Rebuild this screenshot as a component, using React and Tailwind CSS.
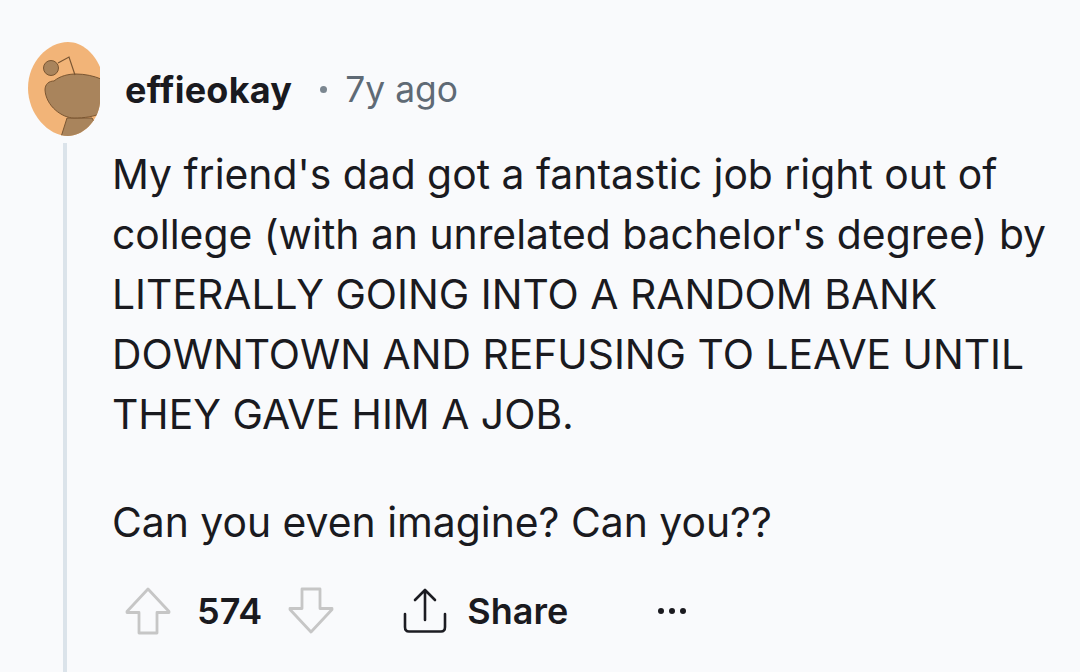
import React from 'react';

const Avatar = () => (
  <svg width="74" height="95" viewBox="27 42 74 95" className="shrink-0">
    <defs>
      <clipPath id="egg">
        <path d="M68 42C82 42 94 53 100 67L100 103C98 122 82 136 68 136C48 136 28 114 28 88C28 62 48 42 68 42Z" />
      </clipPath>
    </defs>
    <g clipPath="url(#egg)">
      <rect x="27" y="42" width="74" height="95" fill="#f2b478" />
      <path d="M61 137L67 118H92L96 125L90 137Z" fill="#a9845c" stroke="#7a5632" strokeWidth="1" />
      <path d="M45 90C45 84 49 81 54 81C60 76 68 74 76 74C85 74 94 76 101 79L104 112C94 117 84 118 74 118C62 118 46 106 45 90Z" fill="#a9845c" stroke="#7a5632" strokeWidth="1" />
      <path d="M58 63L69 57L75 75" fill="none" stroke="#7a5632" strokeWidth="1.2" />
      <circle cx="51" cy="68" r="7.5" fill="#a9845c" stroke="#7a5632" strokeWidth="1" />
    </g>
  </svg>
);

const UpArrow = () => (
  <svg width="46" height="48" viewBox="125 586 46 48" className="shrink-0">
    <path d="M148 588L169 610.5V611.5H157V632H139V611.5H127V610.5Z" fill="none" stroke="#c6c6c6" strokeWidth="2.8" strokeLinejoin="round" />
  </svg>
);

const DownArrow = () => (
  <svg width="46" height="48" viewBox="288 589 46 48" className="shrink-0">
    <path d="M311 634L332 611.5V610.5H320V591H302V610.5H290V611.5Z" fill="none" stroke="#c6c6c6" strokeWidth="2.8" strokeLinejoin="round" />
  </svg>
);

const ShareIcon = () => (
  <svg width="46" height="46" viewBox="402 588 46 46" className="shrink-0">
    <path d="M425 620V591M415 600L425 590L435 600M405 614V627C405 630 406 631.5 409 631.5H441C444 631.5 445 630 445 627V614" fill="none" stroke="#1c1c22" strokeWidth="2.6" strokeLinecap="round" strokeLinejoin="round" />
  </svg>
);

export default function App() {
  return (
    <div className="h-[672px] w-[1080px] overflow-hidden bg-[#f9fafc] font-['Inter',sans-serif] text-[#1a1a1f]">
      <div className="flex h-[143px] items-start pl-[27px] pt-[42px]">
        <Avatar />
        <div className="ml-[24px] flex h-[95px] items-center text-[#1a1a1f]">
          <span className="text-[36px] font-bold leading-none tracking-[0.25px] [font-variant-ligatures:none]">effieokay</span>
          <span className="ml-[28px] h-[7px] w-[7px] rounded-full bg-[#7b8690]" />
          <span className="ml-[18px] text-[35.4px] leading-none text-[#5f6a75]">7y ago</span>
        </div>
      </div>
      <div className="ml-[63px] h-[529px] border-l-[4px] border-[#dbe3ea] pl-[45px]">
        <div className="pt-[1px] text-[40.85px] leading-[60px] whitespace-nowrap">
          <p>My friend's dad got a fantastic job right out of</p>
          <p>college (with an unrelated bachelor's degree) by</p>
          <p>LITERALLY GOING INTO A RANDOM BANK</p>
          <p>DOWNTOWN AND REFUSING TO LEAVE UNTIL</p>
          <p>THEY GAVE HIM A JOB.</p>
          <p className="mt-[48px]">Can you even imagine? Can you??</p>
        </div>
        <div className="mt-[35px] flex items-center">
          <div className="ml-[13px]"><UpArrow /></div>
          <span className="ml-[26px] text-[36px] font-semibold leading-none">574</span>
          <div className="ml-[26px]"><DownArrow /></div>
          <div className="ml-[68px]"><ShareIcon /></div>
          <span className="ml-[19px] text-[36px] font-semibold leading-none">Share</span>
          <div className="ml-[90px] flex gap-[5px]">
            <span className="h-[6px] w-[6px] rounded-full bg-[#1a1a1f]" />
            <span className="h-[6px] w-[6px] rounded-full bg-[#1a1a1f]" />
            <span className="h-[6px] w-[6px] rounded-full bg-[#1a1a1f]" />
          </div>
        </div>
      </div>
    </div>
  );
}
